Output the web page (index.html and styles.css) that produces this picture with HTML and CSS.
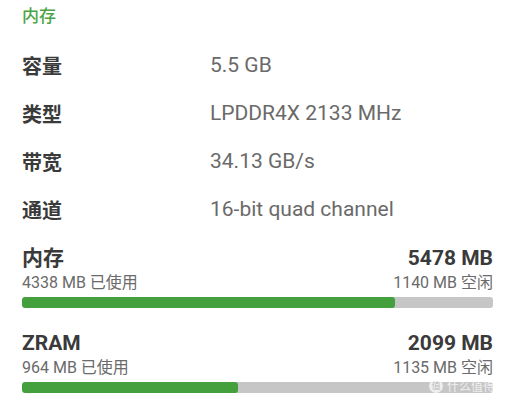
FILE: index.html
```html
<!DOCTYPE html>
<html lang="zh-CN">
<head>
<meta charset="UTF-8">
<title>内存</title>
<link rel="stylesheet" href="styles.css">
</head>
<body>
	<div class="page">
		<div class="title">内存</div>
		<ul class="info">
			<li><span class="key">容量</span><span class="val">5.5 GB</span></li>
			<li><span class="key">类型</span><span class="val">LPDDR4X 2133 MHz</span></li>
			<li><span class="key">带宽</span><span class="val">34.13 GB/s</span></li>
			<li><span class="key">通道</span><span class="val">16-bit quad channel</span></li>
		</ul>
		<div class="usage">
			<div class="head"><span>内存</span><span>5478 MB</span></div>
			<div class="sub"><span>4338 MB 已使用</span><span>1140 MB 空闲</span></div>
			<div class="bar"><div class="fill" style="width: 79.2%"></div></div>
		</div>
		<div class="usage">
			<div class="head"><span>ZRAM</span><span>2099 MB</span></div>
			<div class="sub"><span>964 MB 已使用</span><span>1135 MB 空闲</span></div>
			<div class="bar"><div class="fill" style="width: 45.9%"></div></div>
		</div>
	</div>
	<div class="mark"><span class="mark-logo">值</span>什么值得买</div>
</body>
</html>
```

FILE: styles.css
```css
* { padding: 0; margin: 0; }
li { list-style: none; }

body { background: #fff; font-family: Roboto, "Noto Sans CJK SC", sans-serif; position: relative; height: 400px; overflow: hidden; }

.page { padding: 0 22px; }

.title { font-size: 17px; line-height: 32px; color: #4ba445; font-weight: 500; }

.info { margin-top: 9px; }
.info li { display: flex; height: 48px; align-items: center; }
.key { width: 188px; font-size: 20px; font-weight: bold; color: #3a3a3a; }
.val { font-size: 21px; color: #6a6a6a; }

.usage { margin-top: 12px; }
.usage + .usage { margin-top: 22px; }
.head { display: flex; justify-content: space-between; font-size: 21px; font-weight: bold; color: #3a3a3a; line-height: 26px; }
.sub { display: flex; justify-content: space-between; font-size: 16px; color: #6a6a6a; line-height: 24px; }
.bar { margin-top: 2px; height: 11px; background: #c6c6c6; border-radius: 3px; overflow: hidden; }
.fill { height: 100%; background: #43a03c; border-radius: 3px; }

.mark { position: absolute; right: 8px; bottom: 6px; font-size: 12px; color: rgba(255,255,255,0.75); display: flex; align-items: center; gap: 4px; }
.mark-logo { width: 14px; height: 14px; border-radius: 50%; background: rgba(255,255,255,0.7); color: #bbb; font-size: 9px; line-height: 14px; text-align: center; }
```
